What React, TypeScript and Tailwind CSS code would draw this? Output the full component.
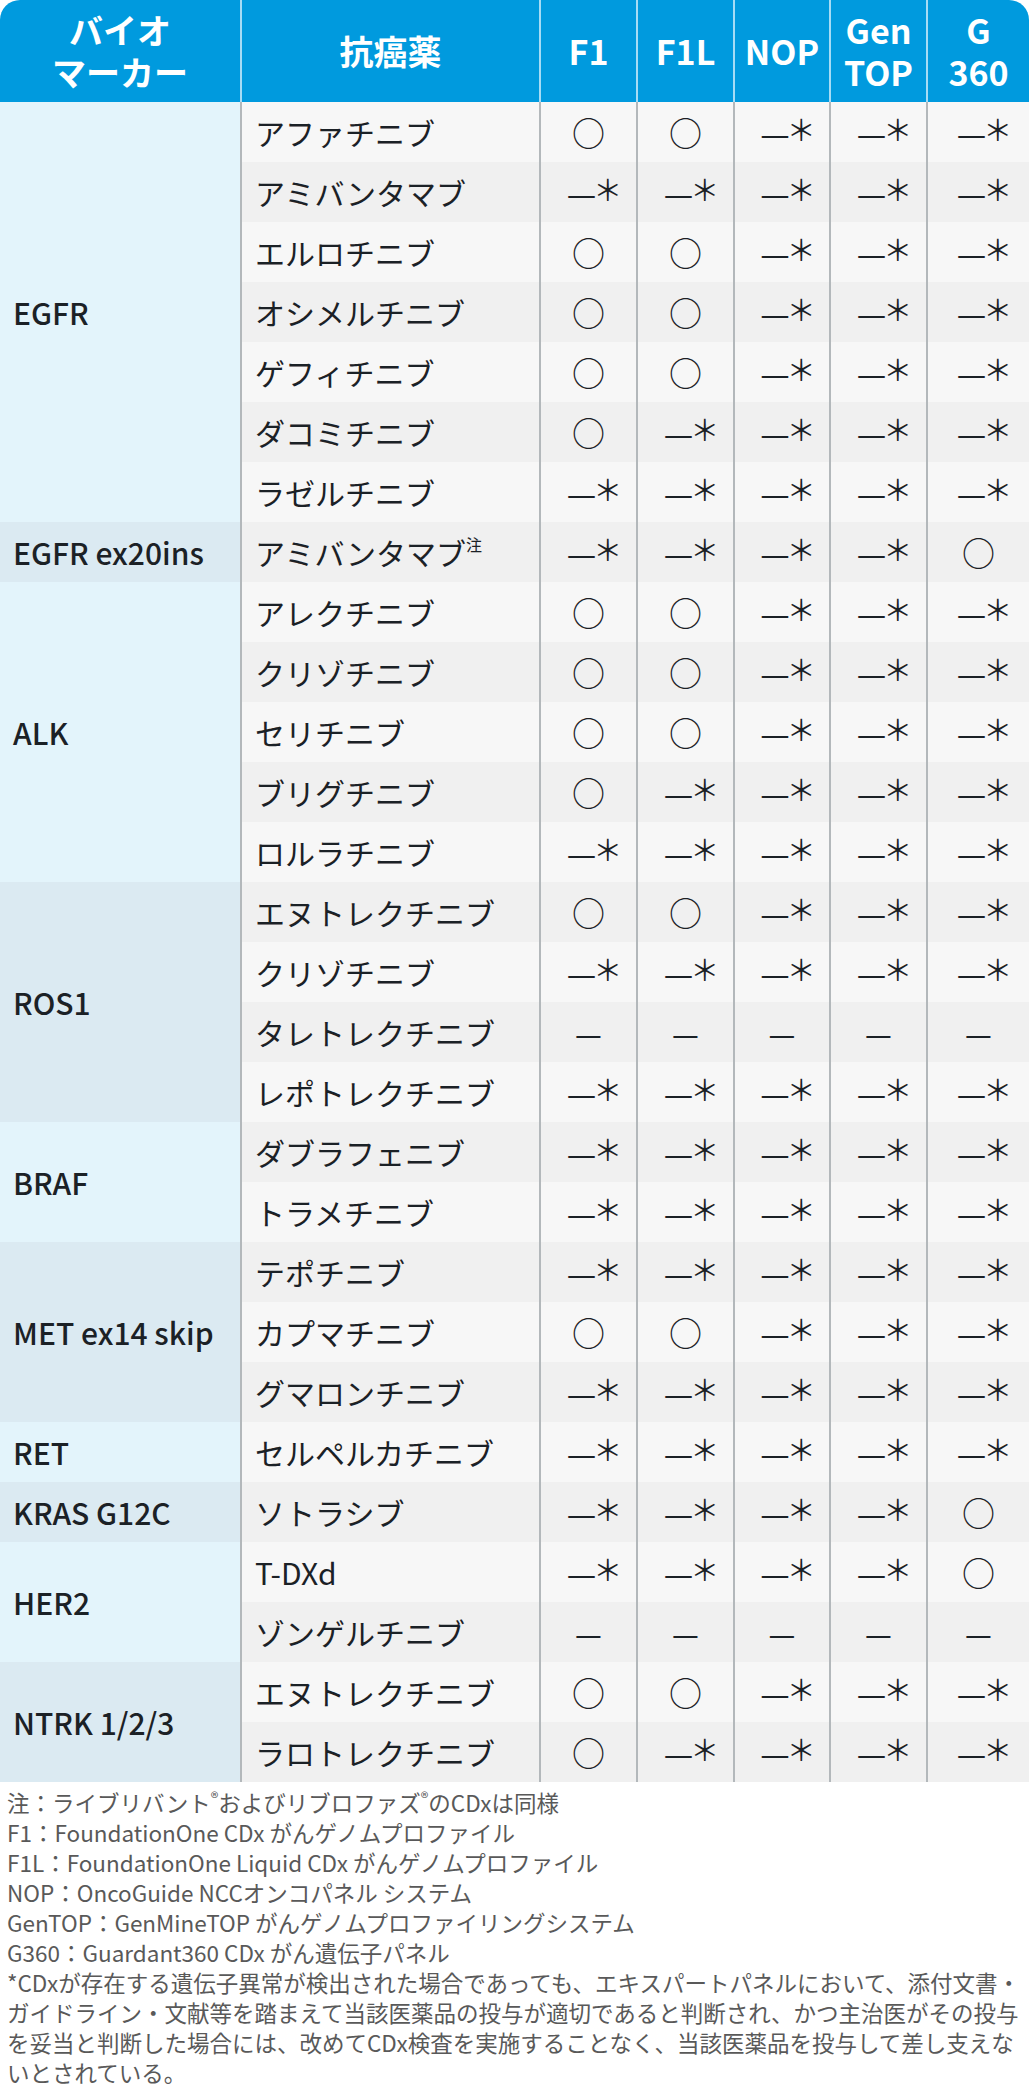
import React from "react";

type Mark = "o" | "x" | "d"; // ○ | —* | —

type Drug = { name: string; note?: boolean; marks: Mark[] };
type Group = { marker: string; drugs: Drug[] };

const O: Mark = "o";
const X: Mark = "x";
const D: Mark = "d";
const ALL_X = [X, X, X, X, X];
const ALL_D = [D, D, D, D, D];

const groups: Group[] = [
  {
    marker: "EGFR",
    drugs: [
      { name: "アファチニブ", marks: [O, O, X, X, X] },
      { name: "アミバンタマブ", marks: ALL_X },
      { name: "エルロチニブ", marks: [O, O, X, X, X] },
      { name: "オシメルチニブ", marks: [O, O, X, X, X] },
      { name: "ゲフィチニブ", marks: [O, O, X, X, X] },
      { name: "ダコミチニブ", marks: [O, X, X, X, X] },
      { name: "ラゼルチニブ", marks: ALL_X },
    ],
  },
  {
    marker: "EGFR ex20ins",
    drugs: [{ name: "アミバンタマブ", note: true, marks: [X, X, X, X, O] }],
  },
  {
    marker: "ALK",
    drugs: [
      { name: "アレクチニブ", marks: [O, O, X, X, X] },
      { name: "クリゾチニブ", marks: [O, O, X, X, X] },
      { name: "セリチニブ", marks: [O, O, X, X, X] },
      { name: "ブリグチニブ", marks: [O, X, X, X, X] },
      { name: "ロルラチニブ", marks: ALL_X },
    ],
  },
  {
    marker: "ROS1",
    drugs: [
      { name: "エヌトレクチニブ", marks: [O, O, X, X, X] },
      { name: "クリゾチニブ", marks: ALL_X },
      { name: "タレトレクチニブ", marks: ALL_D },
      { name: "レポトレクチニブ", marks: ALL_X },
    ],
  },
  {
    marker: "BRAF",
    drugs: [
      { name: "ダブラフェニブ", marks: ALL_X },
      { name: "トラメチニブ", marks: ALL_X },
    ],
  },
  {
    marker: "MET ex14 skip",
    drugs: [
      { name: "テポチニブ", marks: ALL_X },
      { name: "カプマチニブ", marks: [O, O, X, X, X] },
      { name: "グマロンチニブ", marks: ALL_X },
    ],
  },
  {
    marker: "RET",
    drugs: [{ name: "セルペルカチニブ", marks: ALL_X }],
  },
  {
    marker: "KRAS G12C",
    drugs: [{ name: "ソトラシブ", marks: [X, X, X, X, O] }],
  },
  {
    marker: "HER2",
    drugs: [
      { name: "T-DXd", marks: [X, X, X, X, O] },
      { name: "ゾンゲルチニブ", marks: ALL_D },
    ],
  },
  {
    marker: "NTRK 1/2/3",
    drugs: [
      { name: "エヌトレクチニブ", marks: [O, O, X, X, X] },
      { name: "ラロトレクチニブ", marks: [O, X, X, X, X] },
    ],
  },
];

// column widths after the drug column: F1, F1L, NOP, GenTOP, G360
const markCols = ["w-[97px]", "w-[97px]", "w-[96px]", "w-[97px]", "flex-1"];

function MarkCell({ mark, width }: { mark: Mark; width: string }) {
  return (
    <div
      className={`${width} flex items-center justify-center border-l-2 border-[#b3b8bb]`}
    >
      {mark === "o" && <span className="text-[33px] leading-none">○</span>}
      {mark === "x" && (
        <span className="flex items-center pl-[4px] leading-none">
          <span className="text-[33px]">—</span>
          <span className="relative top-[-4px] ml-[-3px] mr-[-8px] text-[29px]">＊</span>
        </span>
      )}
      {mark === "d" && <span className="text-[30px] leading-none">—</span>}
    </div>
  );
}

export default function App() {
  let rowIndex = 0;

  return (
    <div className="w-[1029px] bg-white font-['Noto_Sans_CJK_JP',sans-serif] text-[#1b2126]">
      {/* header */}
      <div className="flex h-[102px] overflow-hidden rounded-t-[20px] bg-[#009ade] text-[34px] font-bold leading-[1.25] text-white">
        <div className="flex w-[240px] flex-col items-center justify-center">
          <span>バイオ</span>
          <span>マーカー</span>
        </div>
        <div className="flex w-[299px] items-center justify-center border-l-2 border-[#a6dcf5]">
          抗癌薬
        </div>
        <div className="flex w-[97px] items-center justify-center border-l-2 border-[#a6dcf5]">
          F1
        </div>
        <div className="flex w-[97px] items-center justify-center border-l-2 border-[#a6dcf5]">
          F1L
        </div>
        <div className="flex w-[96px] items-center justify-center border-l-2 border-[#a6dcf5]">
          NOP
        </div>
        <div className="flex w-[97px] flex-col items-center justify-center border-l-2 border-[#a6dcf5]">
          <span>Gen</span>
          <span>TOP</span>
        </div>
        <div className="flex flex-1 flex-col items-center justify-center border-l-2 border-[#a6dcf5]">
          <span>G</span>
          <span>360</span>
        </div>
      </div>

      {/* body */}
      {groups.map((g, gi) => (
        <div key={g.marker} className="flex">
          <div
            className={`flex w-[240px] items-center pl-[13px] text-[30px] font-medium leading-none ${
              gi % 2 === 0 ? "bg-[#e3f4fb]" : "bg-[#dbeaf2]"
            }`}
          >
            {g.marker}
          </div>
          <div className="flex flex-1 flex-col">
            {g.drugs.map((d) => {
              const even = rowIndex++ % 2 === 1;
              return (
                <div
                  key={d.name}
                  className={`flex h-[60px] ${even ? "bg-[#f0f0f0]" : "bg-[#f7f7f7]"}`}
                >
                  <div className="flex w-[299px] items-center border-l-2 border-[#b3b8bb] pl-[13px] text-[30px] leading-none">
                    {d.name}
                    {d.note && (
                      <span className="relative top-[-8px] text-[16px]">注</span>
                    )}
                  </div>
                  {d.marks.map((m, i) => (
                    <MarkCell key={i} mark={m} width={markCols[i]} />
                  ))}
                </div>
              );
            })}
          </div>
        </div>
      ))}

      {/* notes */}
      <div className="whitespace-nowrap pl-[7px] pt-[5px] pb-[4px] text-[22.5px] leading-[30px] text-[#595959]">
        <div>
          注：ライブリバント<sup className="text-[16px]">®</sup>およびリブロファズ
          <sup className="text-[16px]">®</sup>のCDxは同様
        </div>
        <div>F1：FoundationOne CDx がんゲノムプロファイル</div>
        <div>F1L：FoundationOne Liquid CDx がんゲノムプロファイル</div>
        <div>NOP：OncoGuide NCCオンコパネル システム</div>
        <div>GenTOP：GenMineTOP がんゲノムプロファイリングシステム</div>
        <div>G360：Guardant360 CDx がん遺伝子パネル</div>
        <div>*CDxが存在する遺伝子異常が検出された場合であっても、エキスパートパネルにおいて、添付文書・</div>
        <div>ガイドライン・文献等を踏まえて当該医薬品の投与が適切であると判断され、かつ主治医がその投与</div>
        <div>を妥当と判断した場合には、改めてCDx検査を実施することなく、当該医薬品を投与して差し支えな</div>
        <div>いとされている。</div>
      </div>
    </div>
  );
}
